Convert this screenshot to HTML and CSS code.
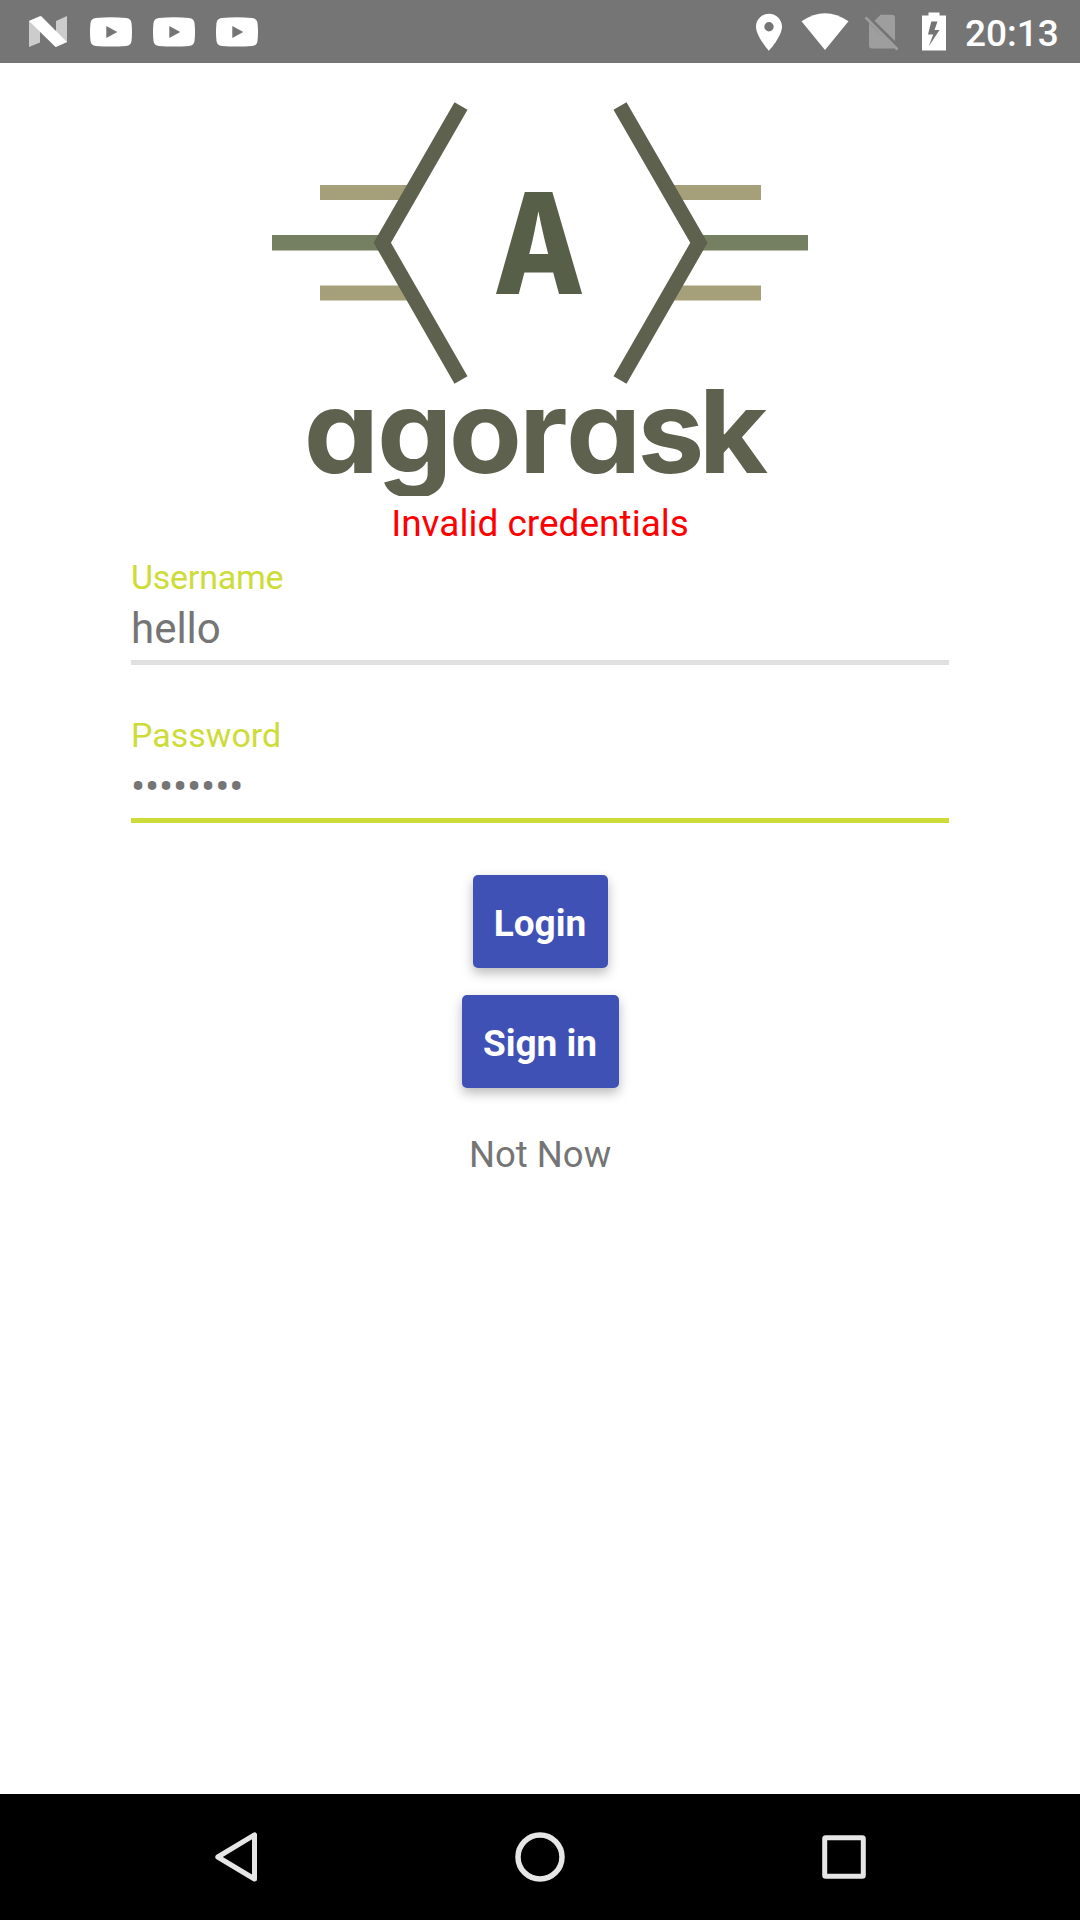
FILE: index.html
```html
<!DOCTYPE html>
<html lang="en">
<head>
<meta charset="utf-8">
<title>agorask</title>
<link rel="stylesheet" href="styles.css">
</head>
<body>
<div class="screen">
  <header class="status-bar">
    <div class="notifications">
      <svg class="icon-n" width="38" height="32" viewBox="0 0 38 32"><path fill="#ccc" d="M0 5L11 0V26.500L0 31zM27 5L38 0V26L27 31z"/><path fill="#fff" d="M0 5L12 0L38 26L26.500 31z"/></svg>
      <svg class="icon-video" width="42" height="30" viewBox="0 0 42 30"><path fill="#fff" fill-rule="evenodd" d="M6 1Q21-.6 36 1Q41 1.500 41.500 6Q42.500 15 41.500 24Q41 28.500 36 29Q21 30 6 29Q1 28.500.5 24Q-.5 15 .5 6Q1 1.500 6 1zM16.300 9V21L27.300 15z"/></svg>
      <svg class="icon-video" width="42" height="30" viewBox="0 0 42 30"><path fill="#fff" fill-rule="evenodd" d="M6 1Q21-.6 36 1Q41 1.500 41.500 6Q42.500 15 41.500 24Q41 28.500 36 29Q21 30 6 29Q1 28.500.5 24Q-.5 15 .5 6Q1 1.500 6 1zM16.300 9V21L27.300 15z"/></svg>
      <svg class="icon-video" width="42" height="30" viewBox="0 0 42 30"><path fill="#fff" fill-rule="evenodd" d="M6 1Q21-.6 36 1Q41 1.500 41.500 6Q42.500 15 41.500 24Q41 28.500 36 29Q21 30 6 29Q1 28.500.5 24Q-.5 15 .5 6Q1 1.500 6 1zM16.300 9V21L27.300 15z"/></svg>
    </div>
    <div class="system">
      <svg width="194" height="40" viewBox="754 11.500 194 40">
        <path fill="#fff" fill-rule="evenodd" d="M769 13.300C761.800 13.300 756 19.100 756 26.300C756 36 769 50.300 769 50.300S782 36 782 26.300C782 19.100 776.200 13.300 769 13.300zM769 31A4.700 4.700 0 1 1 769 21.600A4.700 4.700 0 0 1 769 31z"/>
        <path fill="#fff" d="M801.500 20.800Q825 4.500 848.500 20.800L825 49.500z"/>
        <path fill="#9e9e9e" d="M880.500 14.300H892Q895 14.300 895 17.300V40.500L874.500 20.200zM869 22.500L894 47.500Q893.500 48 892 48H872Q869 48 869 45zM864.600 17.800L866.500 16L898.500 48L896.500 50z"/>
        <path fill="#fff" d="M922 15H928.500V12H939.500V15H946V50H922z"/>
        <path fill="#757575" d="M931.300 21L928 34H933.200L928.700 46L939.500 29.500H934.500L937.500 21z"/>
      </svg>
      <span class="clock">20:13</span>
    </div>
  </header>

  <main class="login">
    <svg class="logo" width="536" height="394" viewBox="272 102 536 394" role="img" aria-label="agorask">
      <path fill="none" stroke="#a59f7a" stroke-width="15" d="M320 192.500H410M320 293H410M761 192.500H671M761 293H671"/>
      <path fill="none" stroke="#757f61" stroke-width="15.500" d="M272 242.800H382M698 242.800H809"/>
      <path fill="none" stroke="#5f614f" stroke-width="15" d="M461 106L382.300 242.800L461 380M620 106L698.900 242.800L620 380"/>
      <text class="logo-mark" transform="translate(539 294) scale(.85 1)" text-anchor="middle">A</text>
      <text class="logo-word" transform="translate(0 472.500) scale(1.030 1)" y="0" x="295 366 435.800 504 549.500 619 678.500">agorask</text>
    </svg>
    <p class="error">Invalid credentials</p>
    <div class="field">
      <span class="label username-label">Username</span>
      <span class="value">hello</span>
    </div>
    <div class="field active">
      <span class="label">Password</span>
      <span class="value password-value">••••••••</span>
    </div>
    <button class="button login-button">Login</button>
    <button class="button signin-button">Sign in</button>
    <a class="skip">Not Now</a>
  </main>

  <nav class="nav-bar">
    <svg width="42" height="50" viewBox="0 0 42 50"><path fill="none" stroke="#e6e6e6" stroke-width="5" stroke-linejoin="round" d="M39.500 2.800V47L2.800 25z"/></svg>
    <svg width="50" height="50" viewBox="0 0 50 50"><circle cx="25" cy="25" r="22" fill="none" stroke="#e6e6e6" stroke-width="5.500"/></svg>
    <svg width="44" height="44" viewBox="0 0 44 44"><rect x="2.700" y="2.700" width="38.600" height="38.600" rx="1" fill="none" stroke="#e6e6e6" stroke-width="5" stroke-linejoin="round"/></svg>
  </nav>
</div>
</body>
</html>
```
FILE: styles.css
```css
* { box-sizing: border-box; }
body { margin: 0; background: #fff; font-family: Roboto, sans-serif; }
.screen { width: 1080px; height: 1920px; display: flex; flex-direction: column; }
svg { display: block; flex: none; }

.status-bar { height: 63px; background: #757575; display: flex; justify-content: space-between; padding: 0 20px 0 28.6px; }
.notifications { display: flex; align-items: center; }
.icon-n { margin-right: 23px; }
.icon-video + .icon-video { margin-left: 21px; }
.system { display: flex; align-items: center; }
.clock { width: 95px; margin-left: 17px; color: #fff; font-size: 37px; font-weight: 500; line-height: 63px; padding-top: 3px; }

.login { flex: 1; display: flex; flex-direction: column; align-items: center; padding-top: 39px; }
.logo { overflow: hidden; }
.logo-mark { font: 800 140px Inter, sans-serif; fill: #575f48; }
.logo-word { font: 700 116px Inter, sans-serif; font-feature-settings: "cv11"; fill: #5f614f; }
.error { margin: 0; height: 57px; line-height: 55px; font-size: 37px; color: #f00; }
.field { width: 818px; height: 112px; display: flex; flex-direction: column; border-bottom: 5px solid #e0e0e0; }
.field.active { margin-top: 46px; border-color: #cddc39; }
.label { height: 49px; line-height: 48px; font-size: 34px; color: #cddc39; }
.username-label { letter-spacing: -.25px; }
.value { height: 54px; line-height: 54px; font-size: 42px; color: #757575; }
.password-value { letter-spacing: -.15px; }
.button { height: 93px; padding: 4px 0 0; border: 0; border-radius: 5px; background: #3f51b5; color: #fff; font: 700 37px Roboto, sans-serif; box-shadow: 0 5px 12px rgba(0, 0, 0, .28); }
.login-button { width: 135px; margin-top: 52px; }
.signin-button { width: 157px; margin-top: 27px; }
.skip { margin-top: 45px; line-height: 44px; font-size: 36.5px; color: #757575; }

.nav-bar { height: 126px; background: #000; display: flex; align-items: center; justify-content: space-between; padding: 0 214px 0 215px; }
```
